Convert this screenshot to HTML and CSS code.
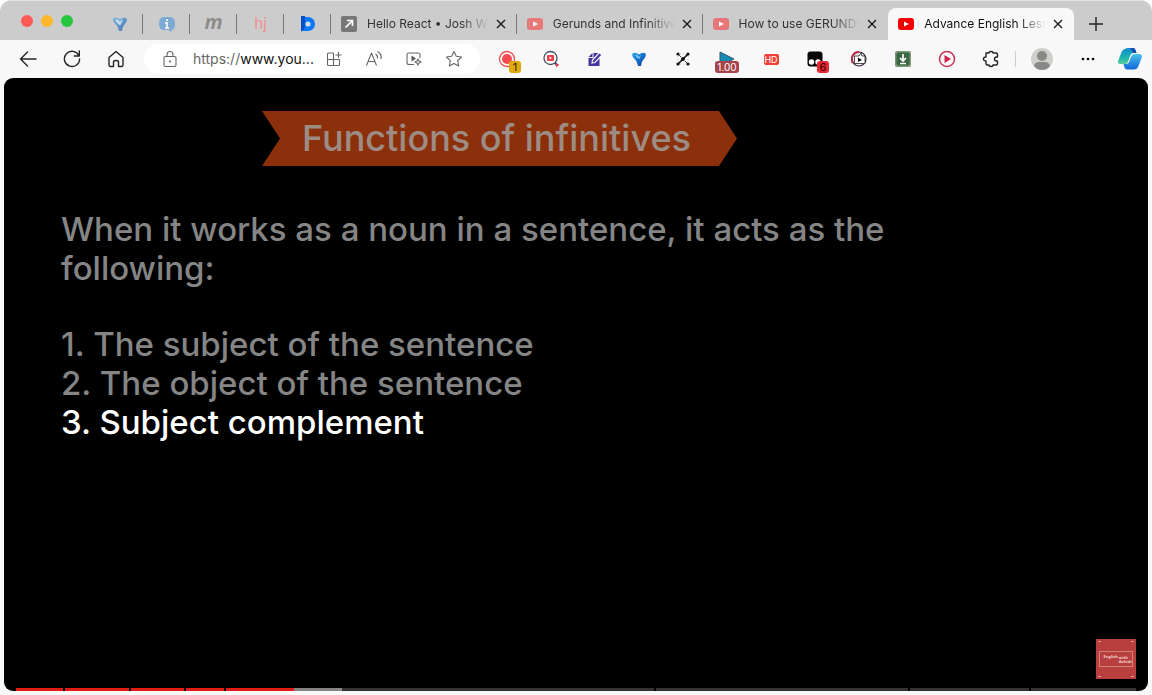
FILE: index.html
```html
<!DOCTYPE html>
<html lang="en">
<head>
<meta charset="utf-8">
<meta name="viewport" content="width=device-width, initial-scale=1">
<title>Advance English Lessons</title>
<link rel="stylesheet" href="styles.css">
</head>
<body>
<div class="browser">
  <header class="tab-strip">
    <div class="window-controls">
      <button class="light light-red" aria-label="Close window"></button>
      <button class="light light-yellow" aria-label="Minimize window"></button>
      <button class="light light-green" aria-label="Zoom window"></button>
    </div>
    <nav class="tabs" aria-label="Tabs">
      <button class="pinned faded" aria-label="Pinned tab Y">
        <svg width="16" height="16" viewBox="0 0 16 16"><defs><linearGradient id="drop" x1="0" y1="0" x2="1" y2="1"><stop offset="0" stop-color="#2ba9f5"/><stop offset="1" stop-color="#06389b"/></linearGradient></defs><path d="M1 3Q4 .5 8 3.500Q12 .5 15 3Q15 6 12.500 8.500Q10 11 10 15H7Q6.500 11 4 8.500Q1 6 1 3Z" fill="url(#drop)"/><path d="M3 3.500Q6 2.500 8 5.500L11 2.500Q10 7 8 9.500Q4 7 3 3.500Z" fill="#bfe4fa"/></svg>
      </button>
      <button class="pinned faded" aria-label="Pinned tab info">
        <svg width="16" height="16" viewBox="0 0 16 16"><path d="M4 1H12Q16 2 16 8Q16 13 13 14L11 16L10 14H4Q0 13 0 8Q0 2 4 1Z" fill="#4595dc"/><path d="M8 3V5M6 7H8V12M6 12H10" fill="none" stroke="#fff" stroke-width="2"/></svg>
      </button>
      <button class="pinned pin-m">m</button>
      <button class="pinned pin-hj">hj</button>
      <button class="pinned" aria-label="Pinned tab D">
        <svg width="16" height="16" viewBox="0 0 16 16"><path d="M1 0H5V11Q5 14 1 15.500Z" fill="#064fc4"/><path d="M5 1H8A7 7 0 0 1 8 15H1Q5 14 5 11Z" fill="#0878f9"/><circle cx="8" cy="8" r="2.600" fill="#d5dbe2"/></svg>
      </button>
      <div class="tab">
        <svg class="favicon" viewBox="0 0 16 16"><rect width="16" height="16" rx="2" fill="#777"/><path d="M4.500 11.500L11 5M6 4.500H11.500V10" fill="none" stroke="#fff" stroke-width="1.700"/></svg>
        <span class="title">Hello React • Josh W</span>
        <button class="close" aria-label="Close tab"><svg width="10" height="10" viewBox="0 0 10 10"><path d="M1 1L9 9M9 1L1 9"/></svg></button>
      </div>
      <div class="tab">
        <svg class="favicon youtube-dim" viewBox="0 0 16 16"><rect y="2" width="16" height="12" rx="3"/><path d="M6 5.500L11 8L6 10.500Z" fill="#fff"/></svg>
        <span class="title">Gerunds and Infinitive</span>
        <button class="close" aria-label="Close tab"><svg width="10" height="10" viewBox="0 0 10 10"><path d="M1 1L9 9M9 1L1 9"/></svg></button>
      </div>
      <div class="tab before-active">
        <svg class="favicon youtube-dim" viewBox="0 0 16 16"><rect y="2" width="16" height="12" rx="3"/><path d="M6 5.500L11 8L6 10.500Z" fill="#fff"/></svg>
        <span class="title">How to use GERUNDS</span>
        <button class="close" aria-label="Close tab"><svg width="10" height="10" viewBox="0 0 10 10"><path d="M1 1L9 9M9 1L1 9"/></svg></button>
      </div>
      <div class="tab active">
        <svg class="favicon youtube" viewBox="0 0 16 16"><rect y="2" width="16" height="12" rx="3"/><path d="M6 5.500L11 8L6 10.500Z" fill="#fff"/></svg>
        <span class="title">Advance English Less</span>
        <button class="close" aria-label="Close tab"><svg width="10" height="10" viewBox="0 0 10 10"><path d="M1 1L9 9M9 1L1 9"/></svg></button>
      </div>
    </nav>
    <button class="new-tab" aria-label="New tab"><svg width="14" height="14" viewBox="0 0 14 14"><path d="M7 0V14M0 7H14" stroke="#222" stroke-width="1.400"/></svg></button>
  </header>

  <div class="toolbar">
    <button class="tool" aria-label="Back"><svg width="18" height="18" viewBox="0 0 18 18"><path d="M17 9H1.500M8.500 2L1.500 9L8.500 16" class="line"/></svg></button>
    <button class="tool" aria-label="Reload"><svg width="18" height="18" viewBox="0 0 18 18"><path d="M15.800 5.500A7.600 7.600 0 1 0 16.600 9M16.300 1V6H11.300" class="line"/></svg></button>
    <button class="tool" aria-label="Home"><svg width="18" height="18" viewBox="0 0 18 18"><path d="M2 7.500L9 1.500L16 7.500V15Q16 16.500 14.500 16.500H11.500V12Q11.500 10.500 9 10.500Q6.500 10.500 6.500 12V16.500H3.500Q2 16.500 2 15Z" class="line"/></svg></button>

    <div class="address">
      <svg class="lock" width="16" height="18" viewBox="0 0 16 18"><rect x="2" y="6.500" width="12" height="10" rx="1.500" class="thin"/><path d="M5 6.500V4.500A3 3 0 0 1 11 4.500V6.500" class="thin"/><circle cx="8" cy="11.500" r="1" fill="#555"/></svg>
      <label class="scheme" for="url">https://</label><input class="url" id="url" type="text" value="www.you...">
      <button class="addr-button" aria-label="App available"><svg width="16" height="16" viewBox="0 0 16 16"><path d="M7.500 2H2.500Q1.500 2 1.500 3V13.500Q1.500 14.500 2.500 14.500H12.500Q13.500 14.500 13.500 13.500V8.500H1.500M7.500 2V14.500M12.500 1V7M9.500 4H15.500" class="thin"/></svg></button>
      <button class="addr-button" aria-label="Read aloud"><svg width="18" height="18" viewBox="0 0 18 18"><path d="M1.500 15.500L6.500 3L11.500 15.500M3.200 11.500H9.800M10.500 4Q13 5.500 12.500 8.500M12.500 1.500Q17 4 16 9" class="thin"/></svg></button>
      <button class="addr-button" aria-label="Enhance video"><svg width="18" height="18" viewBox="0 0 18 18"><path d="M9 14.500H4Q2 14.500 2 12.500V5Q2 3 4 3H13Q15 3 15 5V8M13 9L14 11L16 12L14 13L13 15L12 13L10 12L12 11Z" class="thin"/><path d="M6.500 5.500L11 8.500L6.500 11.500Z" fill="#555"/></svg></button>
      <button class="addr-button" aria-label="Favorite"><svg width="18" height="18" viewBox="0 0 18 18"><path d="M9 1.500L11.300 6.300L16.500 7L12.700 10.700L13.700 16L9 13.500L4.300 16L5.300 10.700L1.500 7L6.700 6.300Z" class="thin"/></svg></button>
    </div>

    <div class="extensions">
      <button class="tool badge-host" aria-label="Recorder"><svg width="18" height="18" viewBox="0 0 18 18"><circle cx="9" cy="9" r="7.500" fill="none" stroke="#ed5054" stroke-width="1.300"/><circle cx="9" cy="9" r="5" fill="#f24a50"/></svg><span class="badge badge-yellow">1</span></button>
      <button class="tool" aria-label="Video search"><svg width="18" height="18" viewBox="0 0 18 18"><circle cx="8.500" cy="8" r="6.500" fill="#fff" stroke="#44515c" stroke-width="1.300"/><rect x="5" y="5" width="7" height="6" rx="1" fill="#ed3e45"/><path d="M7.500 6.500L10 8L7.500 9.500Z" fill="#fff"/><path d="M13 13L14.500 14.500" stroke="#35394c" stroke-width="2"/><path d="M14.500 14.500L16 16" stroke="#ef3048" stroke-width="3"/></svg></button>
      <button class="tool" aria-label="Notes"><svg width="16" height="16" viewBox="0 0 16 16"><path d="M6.500 2H12.500V15H1.500V7H6.500Z" fill="#45329c"/><path d="M1.500 6L5.500 2V6Z" fill="#45329c"/><path d="M5 12L5.500 9L12.500 1.500L15 4L8 11.500Z" fill="#45329c" stroke="#f8f8f8" stroke-width="1.200"/></svg></button>
      <button class="tool" aria-label="Y extension"><svg width="16" height="16" viewBox="0 0 16 16"><path d="M1 3Q4 .5 8 3.500Q12 .5 15 3Q15 6 12.500 8.500Q10 11 10 15H7Q6.500 11 4 8.500Q1 6 1 3Z" fill="url(#drop)"/><path d="M4 3.500Q7 3.500 8 6L10 4Q9 7 8 8Q5 6.500 4 3.500Z" fill="#78c8f6"/></svg></button>
      <button class="tool" aria-label="Graph"><svg width="14" height="14" viewBox="0 0 14 14"><path d="M2 12L12 2" stroke="#111" stroke-width="1.600"/><path d="M2 2L5 5M9 9L12 12" stroke="#111" stroke-width=".8"/><path d="M4 2H10M4 12H10M2 4V10M12 4V10" stroke="#bbb" stroke-dasharray="1 2"/><g fill="#111"><circle cx="2" cy="2" r="1.600"/><circle cx="12" cy="2" r="1.600"/><circle cx="2" cy="12" r="1.600"/><circle cx="12" cy="12" r="1.600"/><circle cx="7" cy="7" r="2"/></g></svg></button>
      <button class="tool badge-host" aria-label="Playback speed"><svg width="16" height="16" viewBox="0 0 16 16"><path d="M1 1L15 8L1 15Z" fill="#168bb6" stroke="#315964"/></svg><span class="badge badge-speed">1.00</span></button>
      <button class="tool"><span class="hd">HD</span></button>
      <button class="tool badge-host" aria-label="Scripts"><svg width="16" height="16" viewBox="0 0 16 16"><rect x=".5" y=".5" width="15" height="15" rx="3" fill="#080808"/><circle cx="4.500" cy="11" r="2.700" fill="#fff"/><circle cx="11" cy="11" r="2.700" fill="#fff"/></svg><span class="badge badge-red">6</span></button>
      <button class="tool" aria-label="Video helper"><svg width="16" height="16" viewBox="0 0 16 16"><circle cx="8" cy="8" r="7" fill="#eee" stroke="#37243e" stroke-width="1.200"/><path d="M2 12A7 7 0 0 1 8 1" fill="none" stroke="#bd2942" stroke-width="2"/><path d="M3.500 5H8L10 2L11 5H14V12.500H3.500Z" fill="#fff" stroke="#222" stroke-width=".8"/><path d="M7 6.500L11 9L7 11Z" fill="#111"/></svg></button>
      <button class="tool" aria-label="Downloader"><svg width="16" height="16" viewBox="0 0 16 16"><rect width="16" height="16" rx="2" fill="#7c9676"/><rect x="1.500" y="1.500" width="13" height="13" rx="2" fill="#3b6642"/><path d="M8 3V9M5 7L8 10L11 7M5 12.500H11" fill="none" stroke="#fff" stroke-width="1.700"/></svg></button>
      <button class="tool" aria-label="Player"><svg width="18" height="18" viewBox="0 0 18 18"><circle cx="9" cy="9" r="7.500" fill="none" stroke="#c83357" stroke-width="1.500"/><path d="M6.500 5L13 9L6.500 13Z" fill="#d5204a"/></svg></button>
      <button class="tool" aria-label="Extensions"><svg width="18" height="18" viewBox="0 0 18 18"><path d="M4 3H7Q7 1.500 9 1.500Q11 1.500 11 3H14Q15.500 3 15.500 4.500V7H14.500Q12.500 7 12.500 9Q12.500 11 14.500 11H15.500V13.500Q15.500 15 14 15H11Q11 16.500 9 16.500Q7 16.500 7 15H5.500Q4 15 4 13.500V11Q1.500 11 1.500 9Q1.500 7 4 7Z" class="line"/></svg></button>
    </div>
    <span class="divider"></span>
    <button class="tool" aria-label="Profile"><svg width="22" height="22" viewBox="0 0 22 22"><circle cx="11" cy="11" r="11" fill="#d0cfcb"/><circle cx="11" cy="8" r="5" fill="#898988"/><path d="M3 18Q4 14 8 14H14Q18 14 19 18Q16 22 11 22Q6 22 3 18Z" fill="#898988"/></svg></button>
    <button class="tool more" aria-label="Settings and more"><svg width="14" height="4" viewBox="0 0 14 4"><circle cx="2" cy="2" r="1.300"/><circle cx="7" cy="2" r="1.300"/><circle cx="12" cy="2" r="1.300"/></svg></button>
    <button class="tool copilot" aria-label="Copilot"><svg width="24" height="22" viewBox="0 0 24 22"><defs><linearGradient id="co-a" x1="0" y1="0" x2="0" y2="1"><stop offset="0" stop-color="#128bd4"/><stop offset=".6" stop-color="#1bb5b0"/><stop offset="1" stop-color="#54ce9a"/></linearGradient><linearGradient id="co-b" x1="0" y1="0" x2="0" y2="1"><stop offset="0" stop-color="#45c3ea"/><stop offset="1" stop-color="#1464d9"/></linearGradient></defs><path d="M7 1Q8 0 10 0H15Q17 0 17.500 2L18.500 5H15Q13 5 12 8L10 14Q9 16 7 16H3Q-1 16 .5 12L3.500 4Q5 1 7 1Z" fill="url(#co-a)"/><path d="M17 6H21Q25 6 23.500 10L20.500 18Q19 21.500 16 21.500H9Q7 21.500 6 18L5.500 16H8Q10.500 16 11.500 13L13 9Q14 6 17 6Z" fill="url(#co-b)"/><path d="M12 0H15Q17 0 17.500 2L18.500 5H15Z" fill="#124faf"/></svg></button>
  </div>

  <main class="video">
    <h1 class="banner">Functions of infinitives</h1>
    <div class="slide">
      <p class="intro">When it works as a noun in a sentence, it acts as the<br>following:</p>
      <ol class="functions">
        <li>1. The subject of the sentence</li>
        <li>2. The object of the sentence</li>
        <li class="current">3. Subject complement</li>
      </ol>
    </div>
    <div class="watermark"><div class="brand"><span>English</span><span class="brand-small">with<br>Ashish</span></div></div>
    <div class="progress">
      <span class="chapter played seg-1"></span>
      <span class="chapter played seg-2"></span>
      <span class="chapter played seg-3"></span>
      <span class="chapter played seg-4"></span>
      <span class="chapter partial seg-5"></span>
      <span class="chapter seg-6"></span>
      <span class="chapter seg-7"></span>
      <span class="chapter seg-8"></span>
    </div>
  </main>
</div>
</body>
</html>
```
FILE: styles.css
```css
* { box-sizing: border-box; }
body {
  margin: 0;
  background: #fff;
  font-family: Inter, "Liberation Sans", sans-serif;
}
button {
  padding: 0;
  border: 0;
  background: none;
  font-family: inherit;
}
svg { display: block; flex: none; }
.browser {
  display: flex;
  flex-direction: column;
  min-height: 100vh;
  padding-bottom: 4px;
  border-radius: 12px 12px 0 0;
  background: #f8f8f8;
  overflow: hidden;
}

/* Tab strip */
.tab-strip {
  display: flex;
  height: 40px;
  background: #ccc;
  border-top: 1px solid #e2e2e2;
}
.window-controls {
  display: flex;
  gap: 8px;
  width: 96px;
  padding: 14px 0 0 21px;
}
.light { width: 12px; height: 12px; border-radius: 50%; }
.light-red { background: #ff5b54; }
.light-yellow { background: #fdb92b; }
.light-green { background: #25c73f; }
.tabs { display: flex; flex: 1; min-width: 0; padding-top: 7px; }
.pinned {
  position: relative;
  display: flex;
  flex: none;
  align-items: center;
  justify-content: center;
  width: 47px;
}
.faded svg { opacity: 0.6; }
.pinned::after,
.tab::after {
  content: "";
  position: absolute;
  right: 0;
  top: 6px;
  width: 1px;
  height: 20px;
  background: #777;
}
.pin-m { padding-bottom: 5px; color: #8c8c8c; font: italic 700 20px/16px "Open Sans", sans-serif; }
.pin-hj { color: #ef9393; font: 400 16px "Liberation Sans", sans-serif; }
.tab {
  position: relative;
  display: flex;
  flex: 1;
  align-items: center;
  min-width: 0;
  padding: 0 8px 0 10px;
}
.before-active::after, .active::after { display: none; }
.tab.active { background: #f8f8f8; border-radius: 8px 8px 0 0; }
.favicon { width: 16px; height: 16px; margin-right: 10px; }
.youtube { fill: #f30000; }
.youtube-dim { fill: #e87878; }
.title {
  flex: 1;
  overflow: hidden;
  white-space: nowrap;
  color: #333;
  font-size: 12px;
  line-height: 18px;
  mask-image: linear-gradient(to right, #000 calc(100% - 28px), transparent);
}
.active .title { color: #111; }
.close { display: flex; flex: none; justify-content: center; width: 16px; margin-left: 4px; }
.close path { stroke: #1c1c1c; stroke-width: 1.4; }
.new-tab { display: flex; align-items: center; justify-content: center; width: 44px; margin-right: 34px; padding-top: 7px; }

/* Toolbar */
.toolbar { display: flex; align-items: center; height: 38px; padding: 0 4px 0 6px; }
.tool {
  display: flex;
  flex: none;
  align-items: center;
  justify-content: center;
  width: 44px;
  height: 30px;
}
.line { fill: none; stroke: #252525; stroke-width: 1.4; stroke-linecap: round; stroke-linejoin: round; }
.thin { fill: none; stroke: #666; stroke-width: 1.1; stroke-linejoin: round; }
.address {
  display: flex;
  flex: 1;
  align-items: center;
  min-width: 0;
  height: 30px;
  margin: 0 5px 0 6px;
  padding: 0 6px 0 18px;
  border-radius: 15px;
  background: #fff;
}
.lock { margin-right: 15px; }
.scheme, .url { font-size: 14px; line-height: 20px; }
.scheme { color: #666; }
.url {
  flex: 1;
  min-width: 0;
  padding: 0;
  border: 0;
  background: none;
  color: #111;
  font-family: inherit;
}
.addr-button { display: flex; flex: none; justify-content: center; width: 40px; }
.extensions { display: flex; }
.badge-host { position: relative; }
.badge {
  position: absolute;
  top: 17px;
  border-radius: 3px;
  font-size: 11px;
  line-height: 12px;
  text-align: center;
}
.badge-yellow { left: 24px; width: 12px; background: #dfaa08; color: #222; }
.badge-speed { left: 10px; width: 24px; background: #a74349; color: #fff; font-size: 10px; }
.badge-red { left: 24px; width: 12px; background: #e52832; color: #300; }
.hd { width: 15px; border-radius: 2px; background: #f14136; color: #fff; font-size: 9px; line-height: 11px; }
.divider { width: 1px; height: 16px; margin: 0 4px 0 2px; background: #ccc; }
.more { width: 48px; }
.copilot { width: 36px; }

/* Video */
.video {
  position: relative;
  flex: 1;
  margin: 0 4px;
  padding: 33px 57px 40px;
  border-radius: 9px;
  background: #000;
  overflow: hidden;
}
.banner {
  width: max-content;
  margin: 0 0 0 201px;
  padding: 0 46px 0 40px;
  background: #8c300c;
  clip-path: polygon(0 0, calc(100% - 18px) 0, 100% 50%, calc(100% - 18px) 100%, 0 100%, 18px 50%);
  color: #9c8c84;
  font: 500 36px/55px Inter, sans-serif;
}
.slide { margin-top: 44px; color: #858585; font: 500 33px/39px Inter, sans-serif; }
.intro { margin: 0 0 37px; }
.functions { margin: 0; padding: 0; list-style: none; }
.current { color: #fff; }
.watermark {
  position: absolute;
  right: 12px;
  bottom: 12px;
  display: flex;
  align-items: center;
  width: 40px;
  height: 40px;
  padding: 3px;
  background:
    linear-gradient(#dba19d, #dba19d) 2px 2px / 3px 1px no-repeat,
    linear-gradient(#dba19d, #dba19d) 35px 2px / 3px 1px no-repeat,
    linear-gradient(#dba19d, #dba19d) 2px 37px / 3px 1px no-repeat,
    linear-gradient(#dba19d, #dba19d) 35px 37px / 3px 1px no-repeat,
    #b93f3e;
}
.brand {
  display: flex;
  flex: 1;
  gap: 1px;
  justify-content: flex-end;
  height: 16px;
  border: 1px solid #cf8078;
  color: #efd2cb;
  font: 700 4px/9px "Open Sans", sans-serif;
}
.brand-small { padding-top: 4px; font-size: 4px; line-height: 4px; }
.progress {
  position: absolute;
  left: 12px;
  right: 12px;
  bottom: 0;
  display: flex;
  gap: 2px;
  height: 3px;
}
.chapter { background: #333; }
.played { background: #e31b16; }
.partial { background: linear-gradient(to right, #e31b16 16%, #858585 16% 27%, #333 27%); }
.seg-1 { flex: 47; }
.seg-2 { flex: 64; }
.seg-3 { flex: 53; }
.seg-4 { flex: 38; }
.seg-5 { flex: 428; }
.seg-6 { flex: 252; }
.seg-7 { flex: 119; }
.seg-8 { flex: 105; }
```
